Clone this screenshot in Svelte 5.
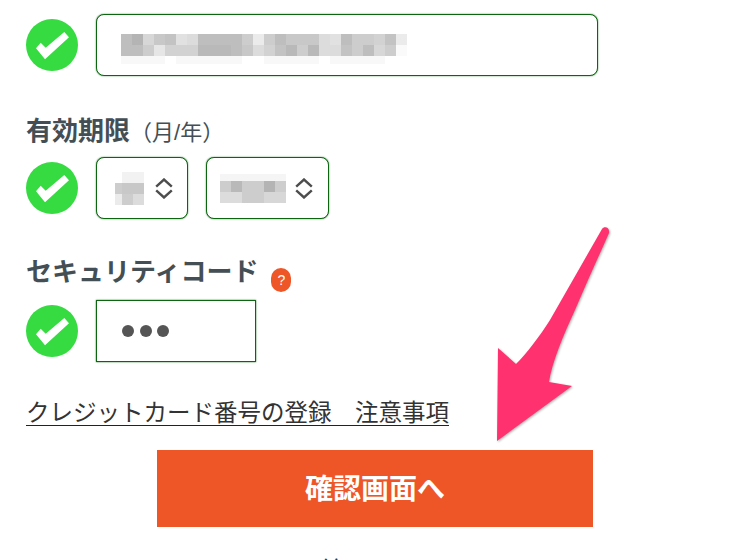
<script>
  // pixelated blur blocks: [x, y, w, h, grey]
  const cardBlocks = [
    [0,0,11,11,190],[11,0,11,11,180],[22,0,11,11,215],[33,0,11,11,200],[44,0,11,11,195],[55,0,11,11,225],[66,0,11,11,220],[77,0,11,11,190],[88,0,11,11,190],[99,0,11,11,190],[110,0,11,11,190],[121,0,11,11,205],[132,0,11,11,235],[143,0,11,11,205],[154,0,11,11,190],[165,0,11,11,200],[176,0,11,11,200],[187,0,11,11,200],[198,0,11,11,220],[209,0,11,11,225],[220,0,11,11,190],[231,0,11,11,205],[242,0,11,11,205],[253,0,11,11,210],[264,0,11,11,195],[275,0,11,11,235],
    [0,11,11,11,190],[11,11,11,11,190],[22,11,11,11,205],[33,11,11,11,230],[44,11,11,11,210],[55,11,11,11,210],[66,11,11,11,210],[77,11,11,11,185],[88,11,11,11,185],[99,11,11,11,185],[110,11,11,11,190],[121,11,11,11,200],[132,11,11,11,220],[143,11,11,11,210],[154,11,11,11,195],[165,11,11,11,185],[176,11,11,11,205],[187,11,11,11,185],[198,11,11,11,220],[209,11,11,11,220],[220,11,11,11,195],[231,11,11,11,205],[242,11,11,11,190],[253,11,11,11,215],[264,11,11,11,205],[275,11,11,11,250],
    [0,22,44,8,248],[55,22,66,8,248],[143,22,55,8,248],[209,22,55,8,248]
  ];
  const monthBlocks = [[7,0,22,11,242],[0,11,11,11,205],[7,11,22,11,200],[0,22,7,11,235],[7,22,11,11,205],[18,22,11,11,220]];
  const yearBlocks = [[0,0,66,7,245],[0,7,11,11,205],[11,7,11,11,185],[22,7,22,11,205],[44,7,11,11,180],[55,7,11,11,205],[0,18,22,11,220],[22,18,22,11,205],[44,18,22,11,215]];
</script>

{#snippet tick()}
  <svg class="tick" viewBox="0 0 52 52" width="52" height="52">
    <circle cx="26" cy="26" r="26" fill="#35db40" />
    <path d="M10 29.3 L14.7 23.7 L19.7 28.7 L38.3 13 L43 18.3 L19 40.3 Z" fill="#fff" />
  </svg>
{/snippet}

{#snippet blur(blocks, w, h, cls)}
  <svg class="blur {cls}" width={w} height={h} viewBox="0 0 {w} {h}">
    {#each blocks as [x, y, bw, bh, g]}
      <rect {x} {y} width={bw} height={bh} fill="rgb({g},{g},{g})" />
    {/each}
  </svg>
{/snippet}

{#snippet arrows()}
  <svg class="updown" width="18" height="21" viewBox="0 0 18 21">
    <path d="M1.2 8.6 L9 1.5 L16.8 8.6 M1.2 12.4 L9 19.5 L16.8 12.4" fill="none" stroke="#4d4d4d" stroke-width="2.4" />
  </svg>
{/snippet}

<main class="page">
  <div class="row">
    {@render tick()}
    <div class="field card">
      {@render blur(cardBlocks, 286, 30, "low")}
    </div>
  </div>

  <h3 class="label">有効期限<span class="sub">（月/年）</span></h3>
  <div class="row">
    {@render tick()}
    <div class="field select month">
      {@render blur(monthBlocks, 29, 33, "")}
      {@render arrows()}
    </div>
    <div class="field select year">
      {@render blur(yearBlocks, 66, 29, "")}
      {@render arrows()}
    </div>
  </div>

  <h3 class="label sec">セキュリティコード<span class="help">?</span></h3>
  <div class="row">
    {@render tick()}
    <div class="field cvc">
      <span class="dot"></span><span class="dot"></span><span class="dot"></span>
    </div>
  </div>

  <a class="notice" href="#top">クレジットカード番号の登録　注意事項</a>

  <button class="submit">確認画面へ</button>
  <a class="back" href="#top">前の画面へ</a>

  <svg class="pointer" width="130" height="230" viewBox="0 0 130 230">
    <path d="M7 221 L8 128 L26 144 C36 134 50 116 60 100 L112 9 C114 6 120 7 119 13 C108 38 96 64 85 90 C74 114 62 142 59 162 L82 166 Z" fill="#ff316e" />
  </svg>
</main>

<style>
  :global(body) {
    background: #fff;
  }

  .page {
    position: relative;
    width: 750px;
    height: 560px;
    overflow: hidden;
    box-sizing: border-box;
    padding: 14px 0 0 26px;
    font-family: "Liberation Sans", "Noto Sans CJK JP", sans-serif;
  }

  .row {
    display: flex;
    align-items: center;
    gap: 18px;
  }

  .tick {
    flex: none;
  }

  .field {
    box-sizing: border-box;
    display: flex;
    align-items: center;
    height: 62px;
    background: #fff;
    border: 1px solid #0b660f;
    box-shadow: 0 0 1.5px rgba(11, 102, 15, 0.9);
    border-radius: 8px;
  }

  .card {
    width: 502px;
    padding-left: 24px;
  }

  .select {
    gap: 11px;
  }

  .month {
    width: 92px;
    padding-left: 18px;
  }

  .year {
    width: 123px;
    padding-left: 13px;
  }

  .year.select {
    gap: 9px;
  }

  .blur {
    flex: none;
    filter: blur(0.7px);
  }

  .low {
    margin-top: 8px;
  }

  .updown {
    flex: none;
  }

  .label {
    height: 28px;
    margin: 41px 0 12px;
    font-size: 26px;
    line-height: 28px;
    font-weight: 700;
    color: #444f55;
  }

  .label .sub {
    font-size: 22px;
    font-weight: 400;
  }

  .label.sec {
    margin: 39px 0 14px;
    display: flex;
    align-items: center;
  }

  .help {
    display: flex;
    align-items: center;
    justify-content: center;
    flex: none;
    width: 20px;
    height: 24px;
    margin-left: 13px;
    margin-top: 10px;
    margin-bottom: -5px;
    border-radius: 10px;
    background: #ee5527;
    color: #fff;
    font-size: 14px;
    font-weight: 400;
  }

  .cvc {
    width: 160px;
    border-radius: 0;
    gap: 5.5px;
    padding-left: 25px;
  }

  .dot {
    width: 12px;
    height: 12px;
    border-radius: 50%;
    background: #555;
  }

  .notice {
    display: block;
    width: fit-content;
    margin: 40px 0 24px;
    color: #333;
    font-size: 23.5px;
    line-height: 23px;
    text-decoration: none;
    border-bottom: 1.5px solid #222;
  }

  .submit {
    display: block;
    width: 436px;
    height: 77px;
    margin: 0 0 0 131px;
    padding: 0 0 3px;
    border: none;
    background: #ee5527;
    color: #fff;
    font-family: inherit;
    font-size: 28px;
    font-weight: 700;
  }

  .back {
    display: block;
    width: 436px;
    margin: 28px 0 0 131px;
    text-align: center;
    color: #333;
    font-size: 22px;
    line-height: 30px;
    text-decoration: none;
  }

  .pointer {
    position: absolute;
    left: 490px;
    top: 220px;
    filter: drop-shadow(1px 1px 1px rgba(0, 0, 0, 0.3));
  }
</style>
